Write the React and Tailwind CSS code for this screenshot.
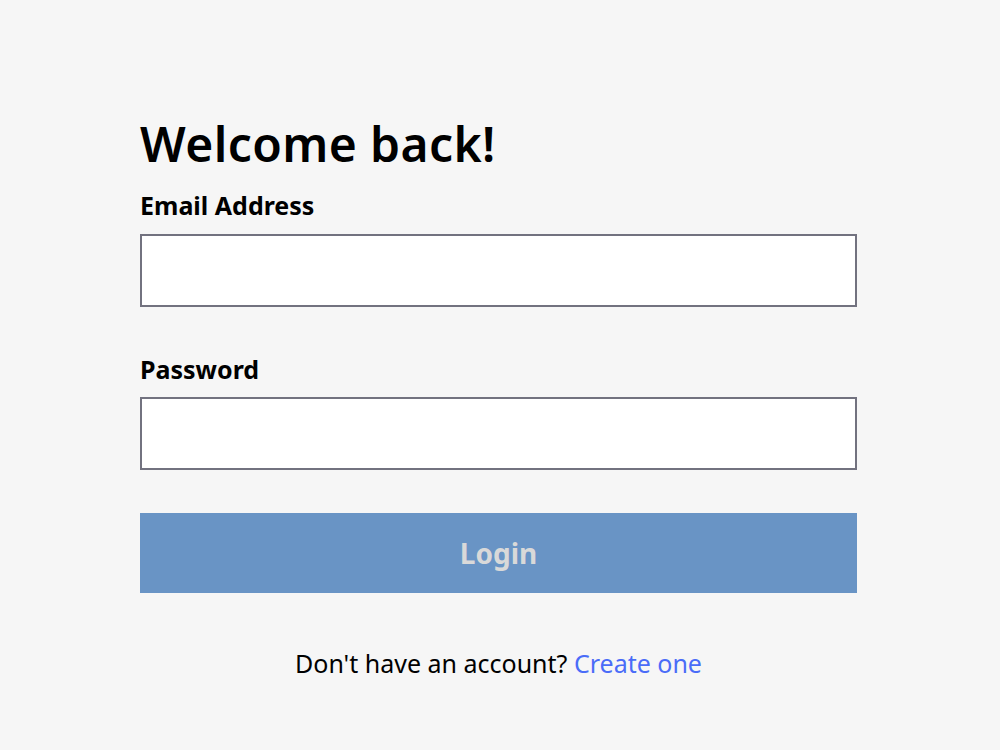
import React, { useState } from 'react';

const font = { fontFamily: '"Noto Sans", "Open Sans", sans-serif' };

export default function App() {
  const [email, setEmail] = useState('');
  const [password, setPassword] = useState('');

  return (
    <div className="min-h-[750px] w-full bg-[#f6f6f6] text-black" style={font}>
      <form
        onSubmit={(e) => e.preventDefault()}
        className="ml-[140px] flex w-[717px] flex-col pt-[112px]"
      >
        <h1 className="text-[48px] font-semibold leading-[64px] tracking-[0.4px]">Welcome back!</h1>

        <label className="mt-[13px] text-[25px] font-bold leading-[32px]">Email Address</label>
        <input
          type="email"
          value={email}
          onChange={(e) => setEmail(e.target.value)}
          className="mt-[13px] h-[73px] w-full border-2 border-[#72727f] bg-white px-3 text-[22px] outline-none"
        />

        <label className="mt-[46px] text-[25px] font-bold leading-[32px]">Password</label>
        <input
          type="password"
          value={password}
          onChange={(e) => setPassword(e.target.value)}
          className="mt-[12px] h-[73px] w-full border-2 border-[#72727f] bg-white px-3 text-[22px] outline-none"
        />

        <button
          type="submit"
          disabled
          className="mt-[43px] h-[80px] w-full bg-[#6994c5] text-[28px] font-bold text-[#d9d9d9]"
        >
          Login
        </button>

        <p className="mt-[54px] text-center text-[25px] leading-[32px]">
          Don't have an account?{' '}
          <a href="#" className="text-[#4a6cf8]">Create one</a>
        </p>
      </form>
    </div>
  );
}
